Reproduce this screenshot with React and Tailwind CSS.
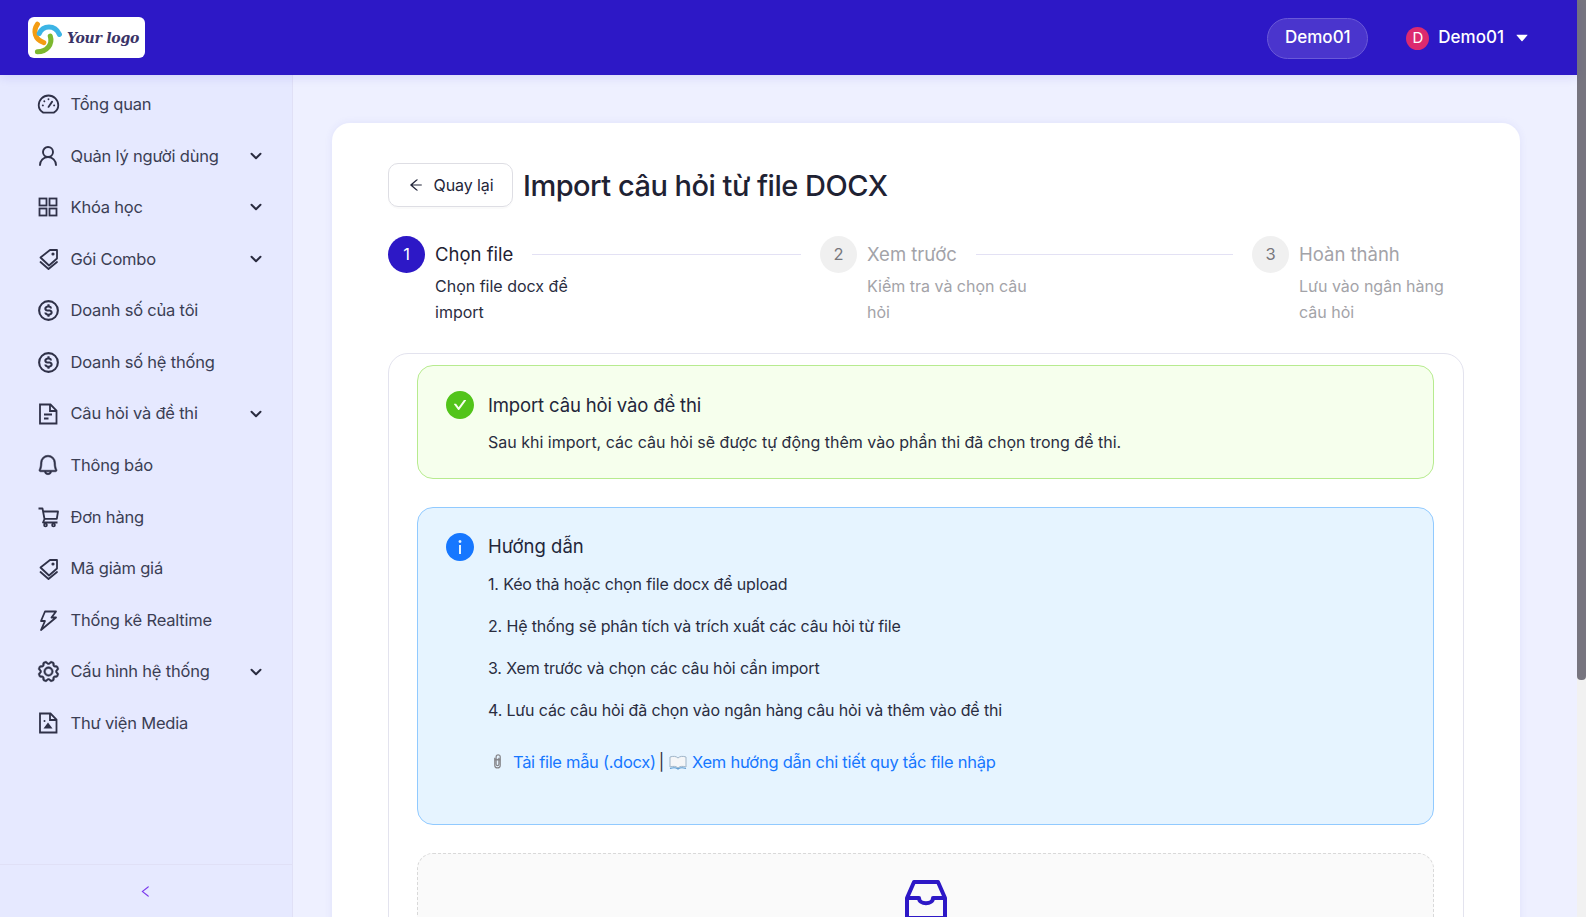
import React from 'react';
import { AiOutlineArrowLeft, AiOutlineLeft, AiFillCheckCircle, AiFillInfoCircle, AiFillCaretDown } from 'react-icons/ai';
import { BiDollarCircle } from 'react-icons/bi';
import { LuChevronDown, LuUserRound } from 'react-icons/lu';
import { PiBell, PiGear } from 'react-icons/pi';

const GaugeIcon = () => (
    <svg viewBox="0 0 24 24" className="w-[23px] h-[23px] ml-px" fill="none" stroke="currentColor" strokeWidth="1.9" strokeLinecap="round" strokeLinejoin="round">
        <path d="M6.5 20.5C3.5 18.8 1.8 16 1.8 12.8A10.2 10.2 0 0 1 22.2 12.8C22.2 16 20.5 18.8 17.5 20.5Z" />
        <path d="M12 14.5 15.8 9M12 6.3V6.5M6 13H6.2M17.8 13H18M7.6 8.6 7.7 8.7" />
    </svg>
);

const GridIcon = () => (
    <svg viewBox="0 0 24 24" className="w-6 h-6" fill="none" stroke="currentColor" strokeWidth="1.8">
        <rect x="3.5" y="3.5" width="7" height="7" />
        <rect x="13.5" y="3.5" width="7" height="7" />
        <rect x="3.5" y="13.5" width="7" height="7" />
        <rect x="13.5" y="13.5" width="7" height="7" />
    </svg>
);

const TagsIcon = () => (
    <svg viewBox="0 0 24 24" className="w-6 h-6" fill="none" stroke="currentColor" strokeWidth="1.8" strokeLinejoin="round" strokeLinecap="round">
        <path d="M4.5 10.5 14 3 21 3 21 11.5 13 18.5Z" />
        <path d="M4.5 15 12.5 22 21 15" />
        <circle cx="17" cy="7" r="0.7" fill="currentColor" />
    </svg>
);

const FileIcon = () => (
    <svg viewBox="0 0 24 24" className="w-6 h-6" fill="none" stroke="currentColor" strokeWidth="1.8">
        <path d="M4 2.5H14.5L20.5 8.5V21.5H4Z" />
        <path d="M14 2.5V9H20.5" />
        <path d="M8 12.5H16M8 16.5H12.5" />
    </svg>
);

const MediaIcon = () => (
    <svg viewBox="0 0 24 24" className="w-6 h-6" fill="none" stroke="currentColor" strokeWidth="1.8">
        <path d="M4 2.5H14.5L20.5 8.5V21.5H4Z" />
        <path d="M14 2.5V9H20.5" />
        <path d="M7.5 17.5 12 11.5 16.5 17.5Z" fill="currentColor" stroke="none" />
        <circle cx="8.5" cy="10" r="1" fill="currentColor" stroke="none" />
    </svg>
);

const CartIcon = () => (
    <svg viewBox="0 0 24 24" className="w-6 h-6" fill="none" stroke="currentColor" strokeWidth="1.8" strokeLinejoin="round">
        <path d="M2.5 3.5H6.5L8.5 14L7 17.5H21.5" />
        <path d="M7 6.5H22L20.8 13.8H8.5" />
        <circle cx="9.5" cy="20" r="1.4" />
        <circle cx="17.5" cy="20" r="1.4" />
    </svg>
);

const BoltIcon = () => (
    <svg viewBox="0 0 24 24" className="w-6 h-6" fill="none" stroke="currentColor" strokeWidth="1.8" strokeLinejoin="round">
        <path d="M9 3.5H20L15.5 9.5H20L5 22 9 13H5Z" />
    </svg>
);

const menu = [
    { label: 'Tổng quan', icon: <GaugeIcon /> },
    { label: 'Quản lý người dùng', icon: <LuUserRound className="w-6 h-6" strokeWidth={1.9} />, sub: true },
    { label: 'Khóa học', icon: <GridIcon />, sub: true },
    { label: 'Gói Combo', icon: <TagsIcon />, sub: true },
    { label: 'Doanh số của tôi', icon: <BiDollarCircle className="w-[25px] h-[25px]" /> },
    { label: 'Doanh số hệ thống', icon: <BiDollarCircle className="w-[25px] h-[25px]" /> },
    { label: 'Câu hỏi và đề thi', icon: <FileIcon />, sub: true },
    { label: 'Thông báo', icon: <PiBell className="w-6 h-6 stroke-current stroke-[6px]" /> },
    { label: 'Đơn hàng', icon: <CartIcon /> },
    { label: 'Mã giảm giá', icon: <TagsIcon /> },
    { label: 'Thống kê Realtime', icon: <BoltIcon /> },
    { label: 'Cấu hình hệ thống', icon: <PiGear className="w-[25px] h-[25px] stroke-current stroke-[6px]" />, sub: true },
    { label: 'Thư viện Media', icon: <MediaIcon /> },
];

const guide = [
    '1. Kéo thả hoặc chọn file docx để upload',
    '2. Hệ thống sẽ phân tích và trích xuất các câu hỏi từ file',
    '3. Xem trước và chọn các câu hỏi cần import',
    '4. Lưu các câu hỏi đã chọn vào ngân hàng câu hỏi và thêm vào đề thi',
];

const Logo = () => (
    <div className="w-[117px] h-[41px] bg-white rounded-[6px] flex items-center pl-[3px] gap-[3px]">
        <svg viewBox="0 0 36 36" className="w-[33px] h-[36px] shrink-0" fill="none" strokeWidth="5.5" strokeLinecap="round">
            <path d="M7 3C2 10 4 20 14 23" stroke="#f39c12" />
            <path d="M9 13C13 4 26 3 31 14" stroke="#3cb4e5" />
            <path d="M21 16C24 25 17 33 7 33" stroke="#7cb82f" />
        </svg>
        <span className="font-['DejaVu_Serif',serif] font-bold italic text-[14px] leading-none tracking-[-0.25px] text-[#3a3366] whitespace-nowrap">Your logo</span>
    </div>
);

const Header = () => (
    <header className="h-[75px] shrink-0 bg-[#2d18c6] flex items-center justify-between pl-[28px] pr-[47px] shadow-[0_2px_10px_rgba(45,24,198,0.12)] relative z-10">
        <Logo />
        <div className="flex items-center font-medium text-white text-[17px] pt-px">
            <div className="w-[101px] h-[41px] rounded-full bg-[#4a35cd] border border-[#6a59d8] flex items-center justify-center">Demo01</div>
            <div className="w-[23px] h-[23px] rounded-full bg-[#dc2a6f] ml-[38px] flex items-center justify-center text-[15px] font-normal">D</div>
            <span className="ml-[9px]">Demo01</span>
            <AiFillCaretDown className="w-[16px] h-[16px] ml-[10px]" />
        </div>
    </header>
);

const Sidebar = () => (
    <aside className="w-[293px] shrink-0 bg-[#e6e9ff] border-r border-[#e0e0f6] flex flex-col">
        <nav className="flex-1 pt-[3.5px]">
            {menu.map(item => (
                <div key={item.label} className="h-[51.6px] flex items-center pl-[35px] pr-[27px] text-[#3b3e54]">
                    <span className="w-[26px] flex justify-center text-[#2f3148]">{item.icon}</span>
                    <span className="ml-[9.5px] flex-1 text-[16.5px] tracking-[-0.2px] whitespace-nowrap">{item.label}</span>
                    {item.sub && <LuChevronDown className="w-[18px] h-[18px] text-[#2a2c40]" strokeWidth={2.6} />}
                </div>
            ))}
        </nav>
        <div className="h-[53px] shrink-0 border-t border-[#e0e0f6] flex items-center justify-center pr-[1px]">
            <AiOutlineLeft className="w-[15px] h-[15px] text-[#7c3aed]" />
        </div>
    </aside>
);

const Step = ({ n, title, desc, active, className }) => (
    <div className={`flex gap-[10px] ${className}`}>
        <div className={`w-[37px] h-[37px] rounded-full shrink-0 flex items-center justify-center text-[16.5px] ${active ? 'bg-[#2d18c6] text-white' : 'bg-[#f0f0f0] text-[#77777c]'}`}>{n}</div>
        <div className="flex-1 min-w-0">
            <div className="h-[37px] flex items-center gap-[19px]">
                <span className={`text-[18.5px] whitespace-nowrap ${active ? 'text-[#1f2233]' : 'text-[#a3a3a8]'}`}>{title}</span>
                {n !== 3 && <span className="flex-1 h-px bg-[#e3e1f4]" />}
            </div>
            <p className={`w-[165px] text-[16px] leading-[26px] ${active ? 'text-[#2a2d3f]' : 'text-[#a3a3a8]'}`}>{desc}</p>
        </div>
    </div>
);

const PaperclipIcon = () => (
    <svg viewBox="0 0 12 18" className="w-[11px] h-[17px]" fill="none" stroke="#85858a" strokeWidth="1.3">
        <path d="M3 5V13C3 17 9 17 9 13V4C9 1 4.5 1 4.5 4V12C4.5 14 7.5 14 7.5 12V5" />
        <path d="M3 7H9" strokeWidth="1.8" />
    </svg>
);

const BookIcon = () => (
    <svg viewBox="0 0 18 16" className="w-[18px] h-[16px]" fill="none">
        <path d="M1 13V3C4 2 7 2 9 4C11 2 14 2 17 3V13C14 12 11 12 9 14C7 12 4 12 1 13Z" fill="#f4f6f8" stroke="#9fb4c8" strokeWidth="1" />
        <path d="M1 14.5C4 13.5 7 13.5 9 15C11 13.5 14 13.5 17 14.5" stroke="#5c9ad0" strokeWidth="1.2" />
    </svg>
);

const InboxIcon = () => (
    <svg viewBox="0 0 42 40" className="w-[42px] h-[40px]" fill="none" stroke="#2d18c6" strokeWidth="4" strokeLinejoin="round">
        <path d="M9 2H33L40 18V38H2V18Z" />
        <path d="M2 18H14C14 25 28 25 28 18H40" />
    </svg>
);

const Main = () => (
    <main className="flex-1 min-w-0 bg-[#eef0ff] pt-[48px] pl-[39px] pr-[57px] overflow-hidden">
        <div className="bg-white rounded-t-[18px] shadow-[0_0_8px_rgba(70,60,200,0.08)] pt-[40px] px-[56px] h-[900px]">
            <div className="flex items-center gap-[10px]">
                <button className="w-[125px] h-[44px] rounded-[10px] border border-[#dedee4] shadow-[0_2px_0_rgba(0,0,0,0.02)] flex items-center justify-center gap-[10px] text-[16px] tracking-[-0.1px] text-[#23263a]">
                    <AiOutlineArrowLeft className="w-[16px] h-[16px]" />
                    Quay lại
                </button>
                <h1 className="text-[29px] leading-none font-medium tracking-[-0.5px] text-[#1f2233] whitespace-nowrap">Import câu hỏi từ file DOCX</h1>
            </div>

            <div className="flex mt-[29px]">
                <Step n={1} active title="Chọn file" desc="Chọn file docx để import" className="w-[413px]" />
                <Step n={2} title="Xem trước" desc="Kiểm tra và chọn câu hỏi" className="ml-[19px] w-[413px]" />
                <Step n={3} title="Hoàn thành" desc="Lưu vào ngân hàng câu hỏi" className="ml-[19px] flex-1" />
            </div>

            <div className="mt-[28px] border border-[#e3e3ee] rounded-[20px] pt-[11px] pl-[28px] pr-[29px] h-[700px]">
                <div className="h-[114px] bg-[#f6ffed] border border-[#b7eb8f] rounded-[16px] pt-[24px] pl-[28px]">
                    <div className="flex items-center h-[30px]">
                        <AiFillCheckCircle className="w-[32px] h-[32px] text-[#52c41a] -ml-[2px]" />
                        <span className="ml-[12px] pt-px text-[18.5px] tracking-[-0.15px] text-[#23263a]">Import câu hỏi vào đề thi</span>
                    </div>
                    <p className="ml-[42px] mt-[10px] text-[16px] leading-[24px] text-[#2a2d3f]">Sau khi import, các câu hỏi sẽ được tự động thêm vào phần thi đã chọn trong đề thi.</p>
                </div>

                <div className="mt-[28px] h-[318px] bg-[#e6f4ff] border border-[#91caff] rounded-[16px] pt-[24px] pl-[28px]">
                    <div className="flex items-center h-[30px]">
                        <AiFillInfoCircle className="w-[32px] h-[32px] text-[#1677ff] -ml-[2px]" />
                        <span className="ml-[12px] text-[18.5px] text-[#23263a]">Hướng dẫn</span>
                    </div>
                    <div className="ml-[42px] mt-[9.5px] flex flex-col gap-[18px] text-[16px] leading-[24px] tracking-[-0.15px] text-[#2a2d3f]">
                        {guide.map(line => <p key={line}>{line}</p>)}
                    </div>
                    <div className="ml-[46px] mt-[28px] flex items-center text-[16.5px] tracking-[-0.25px] text-[#1677ff] whitespace-nowrap">
                        <PaperclipIcon />
                        <a className="ml-[10px] tracking-[-0.3px]">Tải file mẫu (.docx)</a>
                        <span className="ml-[3px] text-[#2a2d3f]">|</span>
                        <span className="ml-[5px]"><BookIcon /></span>
                        <a className="ml-[5px]">Xem hướng dẫn chi tiết quy tắc file nhập</a>
                    </div>
                </div>

                <div className="mt-[28px] h-[200px] bg-[#fafafa] border border-dashed border-[#d9d9d9] rounded-[16px] flex justify-center pt-[26px]">
                    <InboxIcon />
                </div>
            </div>
        </div>
    </main>
);

export default function App() {
    return (
        <div className="h-[917px] flex overflow-hidden font-['Inter',sans-serif]">
            <div className="flex-1 min-w-0 flex flex-col">
                <Header />
                <div className="flex-1 min-h-0 flex">
                    <Sidebar />
                    <Main />
                </div>
            </div>
            <div className="w-[9px] shrink-0 bg-[#f1f1f1]">
                <div className="h-[680px] bg-[#77757f] rounded-b-[4px]" />
            </div>
        </div>
    );
}
